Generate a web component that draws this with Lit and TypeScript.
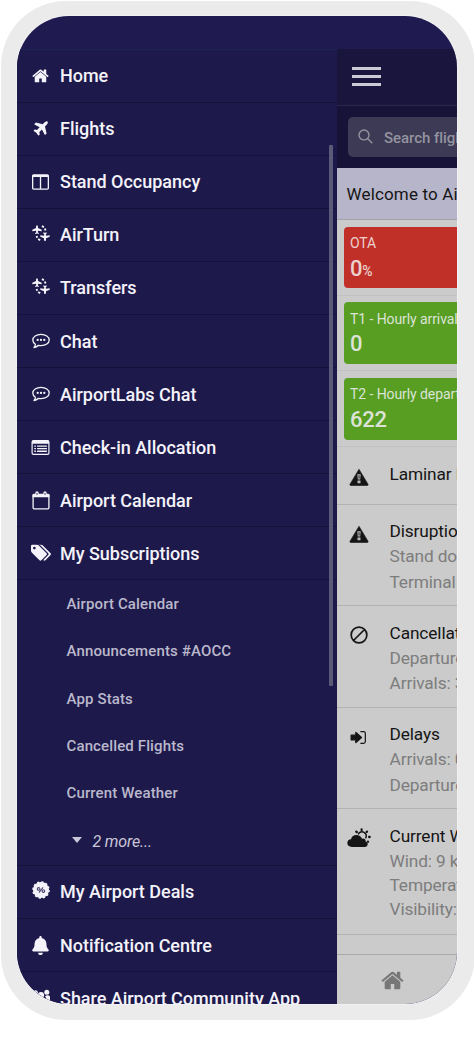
import { LitElement, html, svg, css } from "lit";
import { customElement, property } from "lit/decorators.js";

const HOME = svg`<path d="M1472 992v480q0 26-19 45t-45 19h-384v-384h-256v384h-384q-26 0-45-19t-19-45v-480q0-1 .5-3t.5-3l575-474 575 474q1 2 1 6zm223-69l-62 74q-8 9-21 11h-3q-13 0-21-7l-692-577-692 577q-12 8-24 7-13-2-21-11l-62-74q-8-10-7-23.5t11-21.5l719-599q32-26 76-26t76 26l244 204v-195q0-14 9-23t23-9h192q14 0 23 9t9 23v408l219 182q10 8 11 21.5t-7 23.5z"/>`;

const WARN = svg`<path d="M10 2.2L19 17.2Q19.4 18.5 18 18.5H2Q.6 18.5 1 17.2Z" stroke="currentColor" stroke-linejoin="round" stroke-width=".6"/><path fill="#b9b9b9" d="M8.3 7.2h3.4l-.5 5.4H8.8zM8.5 13.6h3v2.6h-3z"/><path d="M9.6 8.2h.9v3.4h-.9z"/>`;

const ICONS: Record<string, { box: string; art: unknown }> = {
  home: { box: "64 200 1664 1400", art: HOME },
  plane: {
    box: "128 100 1480 1480",
    art: svg`<path d="M1568 160q44 52 12 148t-108 172l-161 161 160 696q5 19-12 33l-128 96q-7 6-19 6-4 0-7-1-15-3-21-16l-279-508-259 259 53 194q5 17-8 31l-96 96q-9 9-23 9h-2q-15-2-24-13l-189-252-252-189q-11-7-13-23-1-13 9-25l96-97q9-9 23-9 6 0 8 1l194 53 259-259-508-279q-14-8-17-24-2-16 9-27l128-128q14-13 30-8l665 159 160-160q76-76 172-108t148 12z"/>`,
  },
  columns: {
    box: "0 96 1664 1536",
    art: svg`<path d="M160 1504h608v-1120h-640v1088q0 13 9.5 22.5t22.5 9.5zm1376-32v-1088h-640v1120h608q13 0 22.5-9.5t9.5-22.5zm128-1216v1216q0 66-47 113t-113 47h-1344q-66 0-113-47t-47-113v-1216q0-66 47-113t113-47h1344q66 0 113 47t47 113z"/>`,
  },
  turn: {
    box: "0 0 18 18",
    art: svg`<path d="M5 1.200q.9 0 1 1.600V4.100L9.700 5.700V7.200L6 6.700 5.800 8.300 6.900 9.200V10L5 9.600 3.100 10V9.200L4.200 8.300 4 6.700.3 7.200V5.700L4 4.100V2.800Q4.100 1.200 5 1.200z"/><path d="M13 17.200q-.9 0-1-1.600V14.300L8.300 12.700V11.200L12 11.700 12.200 10.100 11.100 9.200V8.400L13 8.800 14.900 8.400V9.200L13.800 10.100 14 11.700 17.700 11.200V12.700L14 14.300V15.600Q13.900 17.200 13 17.200z"/><path fill="none" stroke="currentColor" stroke-width="1.900" d="M9.900 2.200L11.900 3.100M12.900 4.600L13.500 6.600M4.600 12L5.100 13.700M6.200 15L8.200 16.300"/>`,
  },
  chat: {
    box: "0 0 18 16",
    art: svg`<path fill="none" stroke="currentColor" stroke-width="1.300" stroke-linejoin="round" d="M9 1.300C13.600 1.300 17.200 3.800 17.200 7S13.600 12.600 9 12.600Q7.700 12.600 6.500 12.300Q4.700 14.200 2 14.500Q3.300 13.200 3.400 11.200Q.8 9.600.8 7C.8 3.800 4.400 1.300 9 1.300z"/><circle cx="5.700" cy="6.900" r="1.150"/><circle cx="9" cy="6.900" r="1.150"/><circle cx="12.300" cy="6.900" r="1.150"/>`,
  },
  list: {
    box: "0 0 18 15",
    art: svg`<rect x=".6" y=".6" width="16.800" height="13.800" rx="1.400" fill="none" stroke="currentColor" stroke-width="1.200"/><path d="M.6.8h16.800v3H.6zM2.800 5.400h1.600v1.300H2.800zM2.800 8h1.600v1.300H2.800zM2.800 10.600h1.600v1.300H2.800zM5.600 5.400h9.800v1.300H5.600zM5.600 8h9.800v1.300H5.600zM5.600 10.600h9.800v1.300H5.600z"/>`,
  },
  calendar: {
    box: "0 0 18 19",
    art: svg`<path fill="none" stroke="currentColor" stroke-width="1.300" d="M1.100 4.500h15.800v12.300q0 1-1 1H2.100q-1 0-1-1z"/><path d="M.5 4.200Q.5 2.800 2 2.800H3.300V2Q3.300.3 5 .3T6.700 2V2.800h4.600V2Q11.300.3 13 .3t1.700 1.700V2.800H16Q17.500 2.800 17.500 4.200V6.300H.5z"/><path fill="#1e194b" d="M4.600 1.700h.8v2.400h-.8zM12.600 1.700h.8v2.400h-.8z"/>`,
  },
  tags: {
    box: "0 192 1900 1452",
    art: svg`<path d="M448 448q0-53-37.500-90.500t-90.500-37.500-90.500 37.500-37.500 90.500 37.500 90.500 90.500 37.500 90.500-37.500 37.500-90.500zm1067 576q0 53-37 90l-491 492q-39 37-91 37-53 0-90-37l-715-716q-38-37-64.500-101t-26.500-117v-416q0-52 38-90t90-38h416q53 0 117 26.500t102 64.500l715 714q37 39 37 91zm384 0q0 53-37 90l-491 492q-39 37-91 37-36 0-59-14t-53-45l470-470q37-37 37-90 0-52-37-91l-715-714q-38-38-102-64.500t-117-26.500h224q53 0 117 26.500t102 64.500l715 714q37 39 37 91z"/>`,
  },
  deals: {
    box: "0 0 18 18",
    art: svg`<circle cx="9" cy="9" r="8"/><circle cx="9" cy="9" r="8" fill="none" stroke="currentColor" stroke-width="1.600" stroke-dasharray="2.200 1.990"/><g fill="none" stroke="#4b4770" stroke-width="1.100"><circle cx="6.600" cy="7.900" r="1.300"/><circle cx="11.400" cy="10.100" r="1.300"/><path d="M11 6.400L7 11.600"/></g>`,
  },
  bell: {
    box: "0 0 448 512",
    art: svg`<path d="M224 512c35.320 0 63.970-28.650 63.970-64H160.030c0 35.350 28.650 64 63.970 64zm215.390-149.710c-19.320-20.760-55.470-51.990-55.470-154.290 0-77.700-54.480-139.900-127.940-155.160V32c0-17.670-14.320-32-31.980-32s-31.980 14.330-31.980 32v20.840C118.560 68.100 64.080 130.300 64.080 208c0 102.300-36.150 133.530-55.470 154.290-6 6.450-8.660 14.160-8.610 21.710.11 16.400 12.980 32 32.100 32h383.800c19.120 0 32-15.600 32.100-32 .05-7.550-2.610-15.270-8.610-21.710z"/>`,
  },
  share: {
    box: "0 0 18 18",
    art: svg`<circle cx="3.500" cy="3.600" r="2.300"/><circle cx="9" cy="6.200" r="3.100"/><circle cx="14.800" cy="3.200" r="2.500"/><path d="M0 7.500Q3 5.500 5 7.500Q5.500 9.500 3.500 12H0zM13 7.200Q16 5.200 18 7.500V12H14.500Q14.800 9 13 7.200zM3.500 16Q3.500 10.200 9 10.200T14.500 16z"/>`,
  },
  search: {
    box: "0 0 16 16",
    art: svg`<path fill="none" stroke="currentColor" stroke-width="1.500" d="M6.400 1a5.300 5.300 0 1 1 0 10.600A5.300 5.300 0 0 1 6.400 1zM10.200 10.200L15.200 15.200"/>`,
  },
  warn: { box: "0 0 20 20", art: WARN },
  ban: {
    box: "0 0 20 20",
    art: svg`<path fill="none" stroke="currentColor" stroke-width="1.900" d="M10 1.300a8.700 8.700 0 1 1 0 17.400A8.700 8.700 0 0 1 10 1.300zM3.900 16.100L16.100 3.900"/>`,
  },
  enter: {
    box: "0 0 18 16",
    art: svg`<path stroke="currentColor" stroke-linejoin="round" stroke-width="1.400" d="M1.200 5.500H6.200V2.600L12.200 8 6.200 13.400V10.500H1.200z"/><path fill="none" stroke="currentColor" stroke-width="1.300" d="M11 1.800h3.300q2 0 2 2v8.400q0 2-2 2H11"/>`,
  },
  weather: {
    box: "0 0 24 20",
    art: svg`<path d="M5 19Q.3 18.700.3 14.800Q.5 11.500 4 11.200Q5.200 7 9.500 7Q13.300 7 15 10.700Q16.800 9.800 18.200 11.400Q18.900 12.300 18.600 13.400Q21 14 20.800 16.300Q20.500 18.800 18 19z"/><path fill="none" stroke="currentColor" stroke-width="1.500" d="M11.200 6.400A4.200 4.200 0 1 1 18.600 10.300"/><g stroke="currentColor" stroke-width="2.300" stroke-linecap="round"><path d="M14.600 1.500v.6M9.300 3.600l.5.500M20 3.600l-.4.400M22.700 9h-.6M21 13.700l-.1-.1"/></g>`,
  },
};

@customElement("ui-icon")
class UiIcon extends LitElement {
  @property() name = "home";
  static styles = css`
    :host { display: block; }
    .glyph { display: block; width: 100%; height: 100%; overflow: visible; fill: currentColor; }
  `;
  render() {
    const icon = ICONS[this.name];
    return html`<svg class="glyph" viewBox=${icon.box}>${icon.art}</svg>`;
  }
}

const MENU = [
  ["home", "Home"],
  ["plane", "Flights"],
  ["columns", "Stand Occupancy"],
  ["turn", "AirTurn"],
  ["turn", "Transfers"],
  ["chat", "Chat"],
  ["chat", "AirportLabs Chat"],
  ["list", "Check-in Allocation"],
  ["calendar", "Airport Calendar"],
  ["tags", "My Subscriptions"],
];
const SUBSCRIPTIONS = ["Airport Calendar", "Announcements #AOCC", "App Stats", "Cancelled Flights", "Current Weather"];
const MENU_END = [
  ["deals", "My Airport Deals"],
  ["bell", "Notification Centre"],
  ["share", "Share Airport Community App"],
];
const CARDS = [
  { tone: "red", label: "OTA", value: "0", unit: "%" },
  { tone: "green", label: "T1 - Hourly arrivals", value: "0", unit: "" },
  { tone: "green", label: "T2 - Hourly departures", value: "622", unit: "" },
];
const FEED = [
  { kind: "single", icon: "warn", title: "Laminar Data", lines: [] },
  { kind: "double", icon: "warn", title: "Disruptions", lines: ["Stand down", "Terminal"] },
  { kind: "double", icon: "ban", title: "Cancellations", lines: ["Departures: 0", "Arrivals: 3"] },
  { kind: "double", icon: "enter", title: "Delays", lines: ["Arrivals: 0", "Departures: 0"] },
  { kind: "triple", icon: "weather", title: "Current Weather", lines: ["Wind: 9 kt", "Temperature", "Visibility: 10"] },
];

@customElement("app-root")
class AppRoot extends LitElement {
  static styles = css`
    :host { display: block; width: 474px; height: 1055px; overflow: hidden; background: #fff; font-family: Roboto, "Liberation Sans", sans-serif; }
    * { box-sizing: border-box; }
    .frame { margin: 1px 0 0 1px; width: 474px; height: 1019px; padding: 15px 17px 16px 16px; background: #ebebeb; border-radius: 65px; }
    .screen { height: 988px; width: 440px; border-radius: 52px; overflow: hidden; background: #1f1a50; box-shadow: 0 0 0 1px #f1f1f3; display: flex; flex-direction: column; }
    .status { height: 33px; flex: none; }
    .body { flex: 1; min-height: 0; display: grid; grid-template-columns: 320px 120px; }
    .drawer { position: relative; background: #1e194b; color: #f4f3fa; overflow: hidden; border-top: 1px solid #1f2552; }
    .item { height: 53.100px; display: flex; align-items: center; padding-left: 13.500px; gap: 9.500px; border-bottom: 1px solid #15113b; font-weight: 500; font-size: 18px; letter-spacing: -0.020px; white-space: nowrap; }
    .item:first-child { height: 52.600px; }
    .slot { width: 20px; flex: none; display: flex; justify-content: center; }
    .i-home { width: 17px; height: 14px; }
    .i-plane { width: 15px; height: 15px; }
    .i-columns { width: 17px; height: 16px; }
    .i-turn { width: 18px; height: 18px; margin-top: -3px; }
    .i-chat { width: 18px; height: 16px; }
    .i-list { width: 19px; height: 15px; }
    .i-calendar { width: 18px; height: 19px; }
    .i-tags { width: 20px; height: 16px; }
    .i-deals { width: 18px; height: 18px; margin-top: -4px; }
    .i-bell { width: 17px; height: 19px; }
    .i-share { width: 18px; height: 18px; }
    .subs { height: 285.500px; border-bottom: 1px solid #15113b; }
    .sub { height: 47.300px; padding-left: 49.500px; display: flex; align-items: center; font-size: 15px; font-weight: 500; letter-spacing: 0.130px; color: #bab8cb; }
    .more { padding-left: 55px; gap: 10.500px; padding-top: 1px; font-style: italic; font-weight: 400; font-size: 16px; letter-spacing: -0.150px; color: #c9c7d8; }
    .caret { border: 5px solid transparent; border-top: 6px solid #c9c7d8; border-bottom: 0; margin-top: -2px; }
    .thumb { position: absolute; top: 95px; left: 312px; width: 4px; height: 541px; background: #5c5978; border-radius: 1px; }

    .page { background: #cbcbcb; overflow: hidden; white-space: nowrap; display: flex; flex-direction: column; color: #151515; }
    .bar { height: 57px; flex: none; background: #19153c; border-bottom: 1px solid #2b2850; padding: 18px 0 0 15px; display: flex; flex-direction: column; gap: 5px; }
    .stripe { width: 29px; height: 3px; flex: none; background: #cbcad6; }
    .searching { height: 62px; flex: none; background: #161238; padding: 11px 0 11px 11px; }
    .box { height: 40px; width: 200px; border-radius: 5px; background: #3c3a55; color: #94939f; display: flex; align-items: center; padding: 1px 0 0 10px; gap: 11px; font-size: 15px; font-weight: 500; letter-spacing: -0.050px; }
    .lens { width: 15px; height: 15px; margin-top: -3px; }
    .welcome { height: 52px; flex: none; background: #b7b5ca; border-bottom: 1px solid #a2a2a8; padding: 1px 0 0 9.500px; display: flex; align-items: center; font-size: 17px; letter-spacing: 0.150px; }
    .cardrow { height: 75.700px; flex: none; padding: 6.500px 0 6.500px 6.500px; border-bottom: 1px solid #c1c1c4; }
    .card { height: 100%; width: 180px; border-radius: 4px; padding: 7.500px 0 0 6.500px; color: #dce3d6; }
    .red { background: #c03029; color: #ecd0cd; }
    .green { background: #579e23; }
    .label { font-size: 14px; line-height: 18px; letter-spacing: -0.080px; }
    .value { font-size: 22px; line-height: 25px; font-weight: 500; margin-top: 3.500px; letter-spacing: -0.200px; }
    .unit { font-size: 14px; font-weight: 500; letter-spacing: -0.500px; }
    .feed { flex: none; display: grid; grid-template-columns: 52.500px 1fr; border-bottom: 1px solid #b2b2b2; font-size: 17.300px; letter-spacing: -0.120px; line-height: 25.300px; padding-top: 14.500px; }
    .single { height: 57.500px; }
    .double { height: 101.500px; }
    .triple { height: 126px; }
    .triple .detail { line-height: 24.300px; }
    .detail { color: #7d7d7d; }
    .mark { margin: 5px 0 0 12px; width: 20px; height: 20px; }
    .m-ban { width: 18px; height: 18px; margin-top: 5px; margin-left: 13px; }
    .m-enter { width: 17px; height: 15px; margin-top: 8px; margin-left: 13px; }
    .m-weather { width: 24px; height: 20px; margin-top: 4px; margin-left: 10px; }
    .spacer { flex: 1; }
    .tabs { height: 50px; flex: none; border-top: 1px solid #aaa; display: flex; padding: 16px 0 0 43.500px; color: #777; }
    .tab { width: 23px; height: 19px; }
  `;

  private item([icon, text]: string[]) {
    return html`<div class="item"><span class="slot"><ui-icon class="i-${icon}" name=${icon}></ui-icon></span><span>${text}</span></div>`;
  }

  render() {
    return html`
      <div class="frame">
        <div class="screen">
          <div class="status"></div>
          <div class="body">
            <nav class="drawer">
              ${MENU.map((m) => this.item(m))}
              <div class="subs">
                ${SUBSCRIPTIONS.map((s) => html`<div class="sub">${s}</div>`)}
                <div class="sub more"><span class="caret"></span><span>2 more...</span></div>
              </div>
              ${MENU_END.map((m) => this.item(m))}
              <div class="thumb"></div>
            </nav>
            <main class="page">
              <div class="bar"><div class="stripe"></div><div class="stripe"></div><div class="stripe"></div></div>
              <div class="searching"><div class="box"><ui-icon class="lens" name="search"></ui-icon><span>Search flights</span></div></div>
              <div class="welcome">Welcome to Airport</div>
              ${CARDS.map((c) => html`<div class="cardrow"><div class="card ${c.tone}">
                <div class="label">${c.label}</div>
                <div class="value">${c.value}<span class="unit">${c.unit}</span></div>
              </div></div>`)}
              ${FEED.map((f) => html`<div class="feed ${f.kind}">
                <ui-icon class="mark m-${f.icon}" name=${f.icon}></ui-icon>
                <div><div>${f.title}</div>${f.lines.map((l) => html`<div class="detail">${l}</div>`)}</div>
              </div>`)}
              <div class="spacer"></div>
              <div class="tabs"><ui-icon class="tab" name="home"></ui-icon></div>
            </main>
          </div>
        </div>
      </div>`;
  }
}
